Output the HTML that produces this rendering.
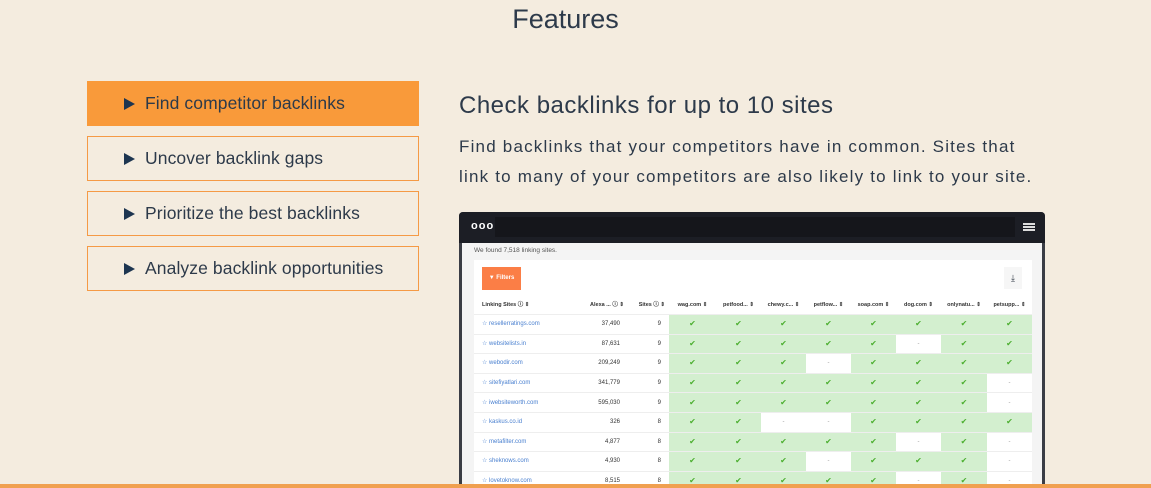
<!DOCTYPE html>
<html><head><style>
html,body{margin:0;width:1151px;height:488px;overflow:hidden}
body{background:#f4ecdf;font-family:"Liberation Sans",sans-serif;position:relative;color:#2b3440}
.t{position:absolute;left:0;width:1131px;text-align:center;top:4px;font-size:27px;color:#2d3a4a}
.m{position:absolute;left:87px;width:332px;height:45px;border:1px solid #f59a45;box-sizing:border-box;font-size:17.5px;line-height:43px;padding-left:57px;color:#2d3a4a;letter-spacing:.1px}
.m:before{content:"";position:absolute;left:36px;top:16px;border-left:11px solid #1d3550;border-top:6px solid transparent;border-bottom:6px solid transparent}
.m.a{background:#f99a3a;border-color:#f99a3a}
h2{position:absolute;left:459px;top:92px;margin:0;font-weight:normal;font-size:24px;letter-spacing:.5px;color:#2d3a4a}
p{position:absolute;left:459px;top:132px;margin:0;font-size:17px;line-height:30px;letter-spacing:1.2px;width:620px;color:#2d3a4a}
.f{position:absolute;left:459px;top:212px;width:586px;height:290px;background:#f4f4f4;border:3px solid #3a3d45;border-top:none;box-sizing:border-box;border-radius:4px}
.hd{position:absolute;left:459px;top:212px;width:586px;height:31px;background:#1c1e25;border-radius:4px 4px 0 0}
.w{position:absolute;left:474px;top:260px;width:558px;height:240px;background:#fff}
table{position:absolute;left:474px;top:296px;border-collapse:collapse;font-size:6px;color:#333;table-layout:fixed}
td{height:18.6px;padding:0;text-align:center;border-bottom:1px solid #eee;line-height:10px;overflow:hidden;white-space:nowrap}
td.g{background:#d3efcf;color:#4caf30;font-size:8px}
td.d{background:#fff;color:#999}
tr.h td{height:18px;font-weight:bold;font-size:5.5px}
td.l{text-align:left;padding-left:8px;color:#4a80d0}
td.n{text-align:right;padding-right:8px}
</style></head><body>
<div class="t">Features</div>
<div class="m a" style="top:81px">Find competitor backlinks</div>
<div class="m" style="top:136px">Uncover backlink gaps</div>
<div class="m" style="top:191px">Prioritize the best backlinks</div>
<div class="m" style="top:246px">Analyze backlink opportunities</div>
<h2>Check backlinks for up to 10 sites</h2>
<p>Find backlinks that your competitors have in common. Sites that<br>link to many of your competitors are also likely to link to your site.</p>
<div class="f"></div>
<div class="hd"><span style="position:absolute;left:12px;top:8px;color:#fff;font-size:11px;font-weight:bold;letter-spacing:1px">ooo</span><div style="position:absolute;left:36px;top:5px;width:520px;height:20px;background:#15161b"></div><div style="position:absolute;right:10px;top:11px;width:12px;height:2px;background:#ddd;box-shadow:0 3px #ddd,0 6px #ddd"></div></div>
<div style="position:absolute;left:474px;top:247px;font-size:6.5px;color:#555">We found 7,518 linking sites.</div>
<div class="w"></div>
<div style="position:absolute;left:482px;top:267px;width:39px;height:23px;background:#fb7e46;color:#fff;font-size:6px;line-height:23px;text-align:center;font-weight:bold">▼ Filters</div>
<div style="position:absolute;left:1004px;top:267px;width:18px;height:22px;background:#f6f6f6;font-size:9px;text-align:center;line-height:22px">⤓</div>
<table>
<colgroup><col style="width:104px"><col style="width:50px"><col style="width:41px"><col style="width:47px"><col style="width:45px"><col style="width:45px"><col style="width:45px"><col style="width:45px"><col style="width:45px"><col style="width:46px"><col style="width:45px"></colgroup>
<tr class="h"><td class="l" style="color:#333">Linking Sites ⓘ ⇕</td><td style="text-align:right;padding-right:4px">Alexa ... ⓘ ⇕</td><td style="text-align:right;padding-right:4px">Sites ⓘ ⇕</td><td>wag.com ⇕</td><td>petfood... ⇕</td><td>chewy.c... ⇕</td><td>petflow... ⇕</td><td>soap.com ⇕</td><td>dog.com ⇕</td><td>onlynatu... ⇕</td><td>petsupp... ⇕</td></tr>
<tr><td class="l">☆ resellerratings.com</td><td class="n">37,490</td><td class="n">9</td><td class="g">✔</td><td class="g">✔</td><td class="g">✔</td><td class="g">✔</td><td class="g">✔</td><td class="g">✔</td><td class="g">✔</td><td class="g">✔</td></tr>
<tr><td class="l">☆ websitelists.in</td><td class="n">87,631</td><td class="n">9</td><td class="g">✔</td><td class="g">✔</td><td class="g">✔</td><td class="g">✔</td><td class="g">✔</td><td class="d">-</td><td class="g">✔</td><td class="g">✔</td></tr>
<tr><td class="l">☆ webodir.com</td><td class="n">209,249</td><td class="n">9</td><td class="g">✔</td><td class="g">✔</td><td class="g">✔</td><td class="d">-</td><td class="g">✔</td><td class="g">✔</td><td class="g">✔</td><td class="g">✔</td></tr>
<tr><td class="l">☆ sitefiyatlari.com</td><td class="n">341,779</td><td class="n">9</td><td class="g">✔</td><td class="g">✔</td><td class="g">✔</td><td class="g">✔</td><td class="g">✔</td><td class="g">✔</td><td class="g">✔</td><td class="d">-</td></tr>
<tr><td class="l">☆ iwebsiteworth.com</td><td class="n">595,030</td><td class="n">9</td><td class="g">✔</td><td class="g">✔</td><td class="g">✔</td><td class="g">✔</td><td class="g">✔</td><td class="g">✔</td><td class="g">✔</td><td class="d">-</td></tr>
<tr><td class="l">☆ kaskus.co.id</td><td class="n">326</td><td class="n">8</td><td class="g">✔</td><td class="g">✔</td><td class="d">-</td><td class="d">-</td><td class="g">✔</td><td class="g">✔</td><td class="g">✔</td><td class="g">✔</td></tr>
<tr><td class="l">☆ metafilter.com</td><td class="n">4,877</td><td class="n">8</td><td class="g">✔</td><td class="g">✔</td><td class="g">✔</td><td class="g">✔</td><td class="g">✔</td><td class="d">-</td><td class="g">✔</td><td class="d">-</td></tr>
<tr><td class="l">☆ sheknows.com</td><td class="n">4,930</td><td class="n">8</td><td class="g">✔</td><td class="g">✔</td><td class="g">✔</td><td class="d">-</td><td class="g">✔</td><td class="g">✔</td><td class="g">✔</td><td class="d">-</td></tr>
<tr><td class="l">☆ lovetoknow.com</td><td class="n">8,515</td><td class="n">8</td><td class="g">✔</td><td class="g">✔</td><td class="g">✔</td><td class="g">✔</td><td class="g">✔</td><td class="d">-</td><td class="g">✔</td><td class="d">-</td></tr>
</table>
<div style="position:absolute;left:0;top:484px;width:1151px;height:4px;background:#f0a050"></div>
</body></html>
